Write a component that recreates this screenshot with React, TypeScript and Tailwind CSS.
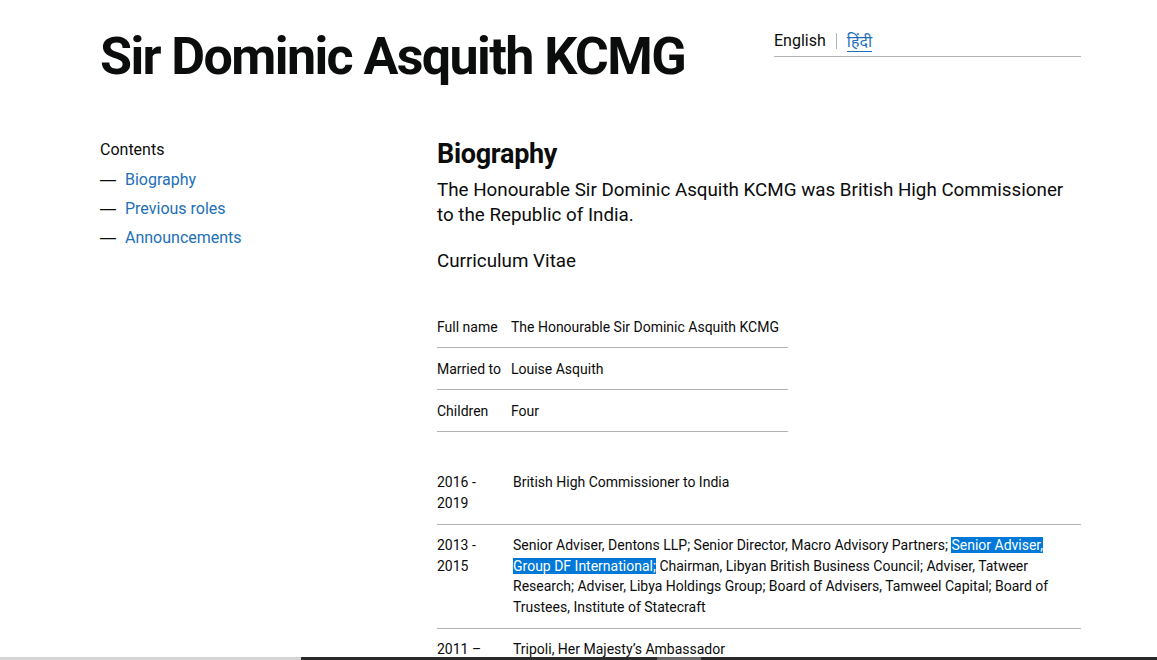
import React from 'react';

const font = { fontFamily: 'Roboto, "Liberation Sans", sans-serif' };

const contents = ['Biography', 'Previous roles', 'Announcements'];

const facts = [
  { label: 'Full name', value: 'The Honourable Sir Dominic Asquith KCMG' },
  { label: 'Married to', value: 'Louise Asquith' },
  { label: 'Children', value: 'Four' },
];

const App: React.FC = () => {
  return (
    <div className="min-h-screen bg-white text-[#0b0c0c] overflow-hidden" style={font}>
      <div className="ml-[100px] w-[981px]">

        {/* Header */}
        <div className="flex justify-between items-start">
          <h1 className="pt-[25px] text-[52px] leading-[64px] font-bold tracking-[-1.6px]">Sir Dominic Asquith KCMG</h1>
          <div className="mt-[29px] w-[307px] border-b border-[#b1b4b6] pb-[3px] flex items-center text-[16px] leading-[24px]">
            <span>English</span>
            <span className="mx-[10px] h-[16px] w-px bg-[#b1b4b6]" />
            <span className="text-[#1d70b8] border-b border-[#1d70b8] leading-[20px]" style={{ fontFamily: '"Noto Sans", sans-serif' }}>हिंदी</span>
          </div>
        </div>

        {/* Body */}
        <div className="mt-[49px] flex">
          <div className="w-[337px] shrink-0">
            <p className="text-[16px] leading-[24px]">Contents</p>
            <ul className="mt-[6px] space-y-[5px]">
              {contents.map((c) => (
                <li key={c} className="flex text-[16px] leading-[24px]">
                  <span className="w-[25px]" style={{ fontFamily: '"Liberation Sans", sans-serif' }}>—</span>
                  <span className="text-[#1d70b8]">{c}</span>
                </li>
              ))}
            </ul>
          </div>

          <div className="flex-1">
            <h2 className="text-[27px] leading-[32px] font-bold tracking-[-0.3px]">Biography</h2>
            <p className="mt-[8px] text-[18.8px] leading-[25px]">
              The Honourable Sir Dominic Asquith KCMG was British High Commissioner to the Republic of India.
            </p>
            <p className="mt-[21px] text-[18.8px] leading-[25px]">Curriculum Vitae</p>

            <table className="mt-[32px] w-[351px] text-[14px] leading-[20px]">
              <tbody>
                {facts.map((f) => (
                  <tr key={f.label} className="border-b border-[#b1b4b6]">
                    <td className="py-[10.5px] pr-[10px] whitespace-nowrap align-top">{f.label}</td>
                    <td className="py-[10.5px] w-full align-top">{f.value}</td>
                  </tr>
                ))}
              </tbody>
            </table>

            <table className="mt-[38px] w-full text-[14px] leading-[20.5px]">
              <tbody>
                <tr className="border-b border-[#b1b4b6]">
                  <td className="w-[76px] pt-[2px] pb-[11px] align-top">2016 -<br />2019</td>
                  <td className="pt-[2px] pb-[11px] align-top">British High Commissioner to India</td>
                </tr>
                <tr className="border-b border-[#b1b4b6]">
                  <td className="w-[76px] pt-[10px] pb-[11px] align-top">2013 -<br />2015</td>
                  <td className="pt-[10px] pb-[11px] pr-[30px] align-top">
                    Senior Adviser, Dentons LLP; Senior Director, Macro Advisory Partners;{' '}
                    <span className="bg-[#0078d7] text-white">Senior Adviser, Group DF International;</span>{' '}
                    Chairman, Libyan British Business Council; Adviser, Tatweer Research; Adviser, Libya Holdings Group; Board of Advisers, Tamweel Capital; Board of Trustees, Institute of Statecraft
                  </td>
                </tr>
                <tr>
                  <td className="w-[76px] pt-[10px] align-top">2011 –</td>
                  <td className="pt-[10px] align-top">Tripoli, Her Majesty’s Ambassador</td>
                </tr>
              </tbody>
            </table>
          </div>
        </div>
      </div>

      {/* bottom window edge */}
      <div className="fixed bottom-0 left-0 right-0 flex h-[3px]">
        <div className="w-[301px] bg-[#d4d4d4]" />
        <div className="w-[356px] bg-[#2b2b2b]" />
        <div className="w-[44px] bg-[#6b6b6b]" />
        <div className="flex-1 bg-[#2b2b2b]" />
      </div>
    </div>
  );
};

export default App;
